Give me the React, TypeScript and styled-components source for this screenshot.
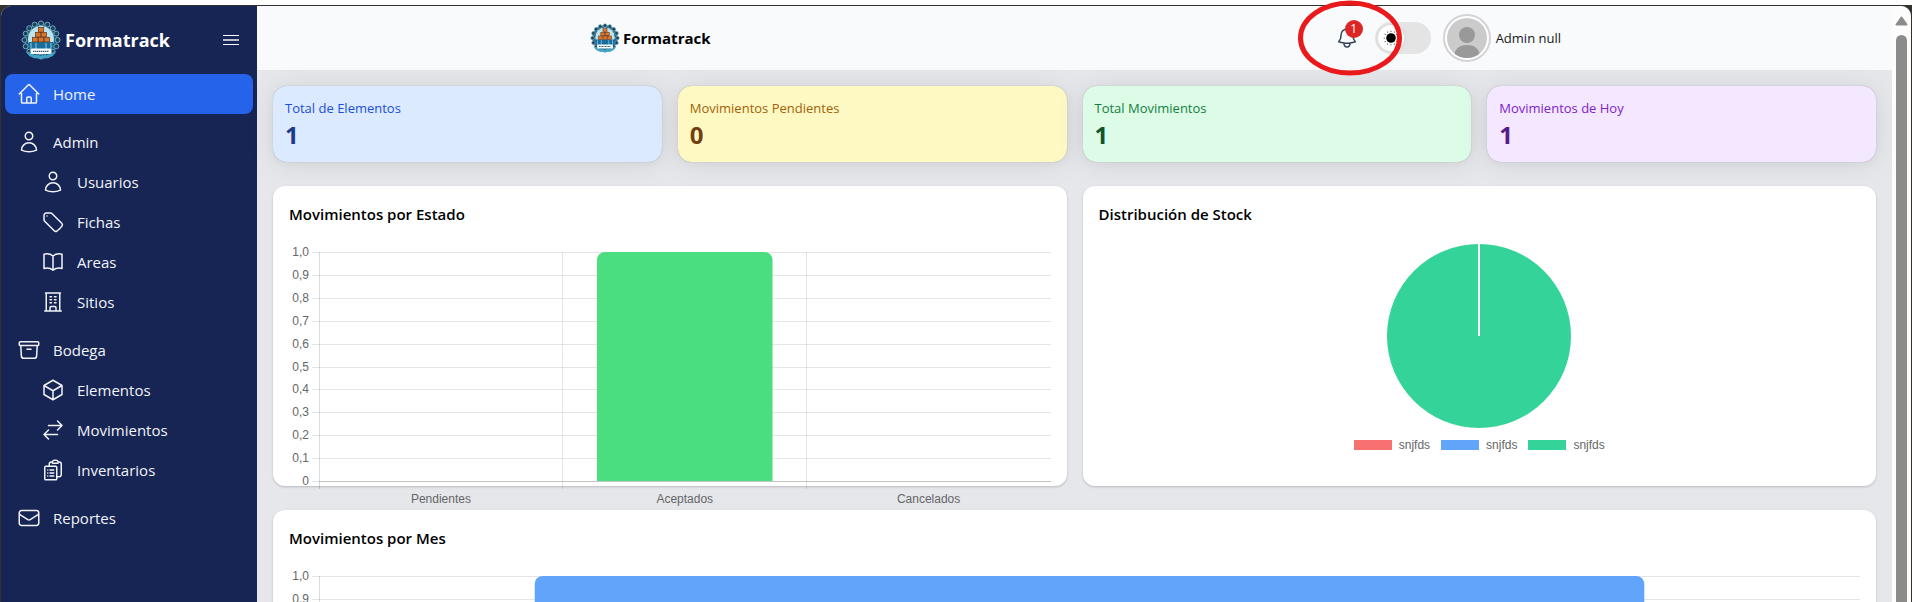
import React from "react";
import styled, { createGlobalStyle } from "styled-components";
import {
  HiOutlineHome,
  HiOutlineUser,
  HiOutlineTag,
  HiOutlineBookOpen,
  HiOutlineBuildingOffice,
  HiOutlineArchiveBox,
  HiOutlineCube,
  HiOutlineArrowsRightLeft,
  HiOutlineClipboardDocumentList,
  HiOutlineEnvelope,
  HiOutlineBell,
} from "react-icons/hi2";

const GlobalStyle = createGlobalStyle`
  *, *::before, *::after { box-sizing: border-box; }
  body {
    margin: 0;
    background: #ffffff;
    font-family: "Open Sans", "Noto Sans", sans-serif;
    color: #000000;
  }
  h2, p { margin: 0; }
  button { font: inherit; border: 0; padding: 0; background: none; cursor: pointer; }
`;

const WindowEdge = styled.div`
  height: 100vh;
  overflow: hidden;
  padding: 6px 1px 0;
  background: linear-gradient(#ffffff 5px, #33322f 5px);
`;

const Shell = styled.div`
  display: flex;
  height: 100%;
  border-radius: 10px 10px 0 0;
  background: #e5e7eb;
`;

/* Sidebar */

const Sidebar = styled.aside`
  flex: none;
  width: 256px;
  border-top-left-radius: 10px;
  background: #172554;
  color: #f1f3f8;
`;

const SidebarHead = styled.div`
  display: flex;
  align-items: center;
  justify-content: space-between;
  height: 68px;
  padding: 0 18px 0 20px;
`;

const Brand = styled.div<{ $size: number }>`
  display: flex;
  align-items: center;
  gap: ${(p) => (p.$size > 16 ? 4 : 3)}px;
  font-size: ${(p) => p.$size}px;
  font-weight: 700;
`;

const SidebarBrand = styled(Brand)`
  color: #ffffff;
`;

const MenuButton = styled.button`
  display: flex;
  color: #ffffff;
`;

const Nav = styled.nav`
  display: flex;
  flex-direction: column;
  gap: 8px;
  padding: 0 4px;
`;

const NavGroup = styled.div`
  display: flex;
  flex-direction: column;
`;

const NavLink = styled.a<{ $active?: boolean; $child?: boolean }>`
  display: flex;
  align-items: center;
  gap: 12px;
  height: 40px;
  padding-left: ${(p) => (p.$child ? 36 : 12)}px;
  border-radius: 8px;
  background: ${(p) => (p.$active ? "#2563eb" : "transparent")};
  color: inherit;
  font-size: 15px;
  font-weight: 500;
  text-decoration: none;

  svg { width: 24px; height: 24px; flex: none; }
`;

/* Top bar */

const Page = styled.div`
  display: flex;
  flex: 1;
  flex-direction: column;
  min-width: 0;
`;

const TopBar = styled.header`
  display: flex;
  flex: none;
  align-items: center;
  justify-content: space-between;
  height: 64px;
  padding: 0 20%;
  background: #f8fafc;
`;

const TopBrand = styled(Brand)`
  padding-left: 6px;
`;

const Tools = styled.div`
  display: flex;
  align-items: center;
  padding-right: 4px;
`;

const BellButton = styled.button`
  position: relative;
  display: flex;
  margin-right: 16px;
  color: #334155;

  svg.bell { width: 24px; height: 24px; }
`;

const Badge = styled.span`
  position: absolute;
  top: -6px;
  right: -4px;
  width: 18px;
  height: 18px;
  border-radius: 50%;
  background: #dc2626;
  color: #ffffff;
  font-size: 12px;
  line-height: 18px;
  text-align: center;
`;

const Marker = styled.svg`
  position: absolute;
  z-index: 2;
  top: -26px;
  left: -38px;
  width: 106px;
  height: 76px;
  pointer-events: none;
`;

const Switch = styled.label`
  position: relative;
  display: flex;
  align-items: center;
  width: 56px;
  height: 32px;
  padding: 0 3px;
  margin-right: 12px;
  border-radius: 16px;
  background: #e4e4e5;
  cursor: pointer;

  input {
    position: absolute;
    inset: 0;
    margin: 0;
    opacity: 0;
  }
`;

const Thumb = styled.span`
  display: flex;
  width: 26px;
  height: 26px;
  border-radius: 50%;
  background: #ffffff;
  box-shadow: 0 0 4px rgba(0, 0, 0, 0.08);
`;

const Avatar = styled.span`
  display: flex;
  width: 48px;
  height: 48px;
  margin-right: 5px;
  padding: 2px;
  border: 2px solid #d4d4d8;
  border-radius: 50%;
  background: #ffffff;
`;

const UserName = styled.span`
  font-size: 13px;
  line-height: 20px;
  color: #18181b;
`;

/* Dashboard */

const Main = styled.main`
  display: flex;
  flex-direction: column;
  gap: 24px;
  padding: 16px;
`;

const Stats = styled.section`
  display: grid;
  grid-template-columns: repeat(4, 1fr);
  gap: 16px;
`;

const StatCard = styled.div<{ $bg: string; $label: string; $value: string }>`
  height: 76px;
  padding: 12px;
  border-radius: 14px;
  background: ${(p) => p.$bg};
  box-shadow: 0 0 1px rgba(0, 0, 0, 0.3), 0 2px 10px rgba(0, 0, 0, 0.04),
    0 2px 30px rgba(0, 0, 0, 0.08);

  p { font-size: 13px; line-height: 20px; color: ${(p) => p.$label}; }
  strong { display: block; font-size: 24px; line-height: 34px; color: ${(p) => p.$value}; }
`;

const Charts = styled.section`
  display: grid;
  grid-template-columns: repeat(2, 1fr);
  gap: 24px 16px;
`;

const ChartCard = styled.article<{ $wide?: boolean }>`
  position: relative;
  height: 300px;
  padding: 16px;
  grid-column: ${(p) => (p.$wide ? "1 / -1" : "auto")};
  border-radius: 12px;
  background: #ffffff;
  box-shadow: 0 1px 3px rgba(0, 0, 0, 0.1), 0 1px 2px rgba(0, 0, 0, 0.1);

  h2 { font-size: 15px; font-weight: 600; line-height: 24px; }
`;

const BarArea = styled.div`
  display: flex;
  height: 264px;
  margin-top: 16px;
`;

const ChartSvg = styled.svg`
  display: block;
  height: 264px;
  overflow: visible;
  font-family: "Liberation Sans", Arial, sans-serif;
  font-size: 12px;
  fill: #666666;
`;

const AxisSvg = styled(ChartSvg)`
  flex: none;
  width: 30px;
`;

const PlotSvg = styled(ChartSvg)`
  flex: 1;
  min-width: 0;
`;

const PieArea = styled.div`
  display: flex;
  flex-direction: column;
  align-items: center;
  gap: 9px;
  margin-top: 17px;
`;

const Legend = styled.ul`
  display: flex;
  gap: 11px;
  margin: 0;
  padding: 0;
  list-style: none;
  font-family: "Liberation Sans", Arial, sans-serif;
  font-size: 12px;
  line-height: 14px;
  color: #666666;
`;

const LegendItem = styled.li<{ $color: string }>`
  display: flex;
  align-items: center;
  gap: 7px;

  &::before {
    content: "";
    width: 38px;
    height: 10px;
    background: ${(p) => p.$color};
  }
`;

/* Scroll rail */

const ScrollRail = styled.div`
  display: flex;
  flex: none;
  flex-direction: column;
  align-items: center;
  gap: 9px;
  width: 19px;
  padding-top: 10px;
  border-top-right-radius: 10px;
  background: #fcfcfc;
`;

const ScrollThumb = styled.div`
  flex: 1;
  width: 11px;
  border-radius: 6px 6px 0 0;
  background: #8b8b8b;
`;

const ringAngles = Array.from({ length: 16 }, (_, i) => (i * Math.PI) / 8);

function Logo({ size }: { size: number }) {
  return (
    <svg width={size} height={size} viewBox="0 0 40 40" aria-hidden="true">
      <circle cx="20" cy="20" r="17" fill="#1d5878" />
      {ringAngles.map((a) => (
        <circle
          key={a}
          cx={20 + 16.6 * Math.cos(a)}
          cy={20 + 16.6 * Math.sin(a)}
          r="2.5"
          fill="#17455f"
          stroke="#8cc3d4"
          strokeWidth="0.8"
        />
      ))}
      <circle cx="20" cy="19" r="13" fill="#b9e4ef" />
      <path d="M8 22h24v6l-4 5H12l-4-5z" fill="#1c6c9c" />
      <path d="M10 23v7M15 23v7M25 23v7M30 23v7" stroke="#6fc0dc" strokeWidth="1.2" />
      <g fill="#d9752b" stroke="#6b3415" strokeWidth="0.7">
        <rect x="17.3" y="7.5" width="5.4" height="4.6" />
        <rect x="14.4" y="12.4" width="5.4" height="4.6" />
        <rect x="20.2" y="12.4" width="5.4" height="4.6" />
        <rect x="11.4" y="17.3" width="5.4" height="4.6" />
        <rect x="17.3" y="17.3" width="5.4" height="4.6" />
        <rect x="23.2" y="17.3" width="5.4" height="4.6" />
      </g>
      <path d="M6 31q14 9 28 0l-2 5q-12 6-24 0z" fill="#40a5c8" />
      <rect x="9.5" y="28.5" width="21" height="5.6" rx="1.6" fill="#f5fbfd" />
      <path d="M12 31.3h16" stroke="#3b5564" strokeWidth="1.3" strokeDasharray="1.4 0.6" />
    </svg>
  );
}

function SunIcon() {
  const rays = Array.from({ length: 12 }, (_, i) => (i * Math.PI) / 6);
  return (
    <svg width="26" height="26" viewBox="0 0 26 26" aria-hidden="true">
      <circle cx="13" cy="13" r="4.8" />
      {rays.map((a) => (
        <circle key={a} cx={13 + 6.8 * Math.cos(a)} cy={13 + 6.8 * Math.sin(a)} r="0.5" />
      ))}
    </svg>
  );
}

function Person() {
  return (
    <svg width="40" height="40" viewBox="0 0 40 40" role="img" aria-label="Admin null">
      <clipPath id="avatar-clip">
        <circle cx="20" cy="20" r="20" />
      </clipPath>
      <g clipPath="url(#avatar-clip)">
        <rect width="40" height="40" fill="#cbcbcb" />
        <circle cx="20" cy="17" r="8" fill="#999999" />
        <path d="M7 40c0-9 5-13 13-13s13 4 13 13z" fill="#999999" />
      </g>
    </svg>
  );
}

const TOP = 10;
const HEIGHT = 229;
const ticks = Array.from({ length: 11 }, (_, i) => ({
  label: i === 10 ? "0" : ((10 - i) / 10).toFixed(1).replace(".", ","),
  y: TOP + Math.round((HEIGHT * i) / 10),
}));

interface Category {
  name: string;
  value: number;
}

function BarChart({ data, color }: { data: Category[]; color: string }) {
  const step = 100 / data.length;
  const clipId = "bars-" + color.slice(1);
  return (
    <BarArea>
      <AxisSvg>
        {ticks.map((t) => (
          <text key={t.label} x="20" y={t.y + 4} textAnchor="end">
            {t.label}
          </text>
        ))}
      </AxisSvg>
      <PlotSvg>
        <g stroke="#e5e5e5" shapeRendering="crispEdges">
          {ticks.map((t) => (
            <line key={t.label} x1="-7" x2="100%" y1={t.y} y2={t.y} />
          ))}
          {data.slice(1).map((d, i) => (
            <line
              key={d.name}
              x1={`${step * (i + 1)}%`}
              x2={`${step * (i + 1)}%`}
              y1={TOP}
              y2={TOP + HEIGHT + 8}
              stroke="#000000"
              strokeOpacity="0.1"
            />
          ))}
        </g>
        <clipPath id={clipId}>
          <rect x="0" y="0" width="100%" height={TOP + HEIGHT} />
        </clipPath>
        <g clipPath={`url(#${clipId})`}>
          {data.map((d, i) =>
            d.value > 0 ? (
              <rect
                key={d.name}
                x={`${step * (i + 0.14)}%`}
                y={TOP + HEIGHT * (1 - d.value)}
                width={`${step * 0.72}%`}
                height={HEIGHT * d.value + 10}
                rx="8"
                fill={color}
              />
            ) : null
          )}
        </g>
        <g stroke="#000000" strokeOpacity="0.14" shapeRendering="crispEdges">
          <line x1="0" x2="0" y1={TOP} y2={TOP + HEIGHT + 8} />
          <line x1="0" x2="100%" y1={TOP + HEIGHT} y2={TOP + HEIGHT} />
        </g>
        {data.map((d, i) => (
          <text key={d.name} x={`${step * (i + 0.5)}%`} y={TOP + HEIGHT + 22} textAnchor="middle">
            {d.name}
          </text>
        ))}
      </PlotSvg>
    </BarArea>
  );
}

const groups = [
  { title: "Home", Icon: HiOutlineHome, active: true, children: [] },
  {
    title: "Admin",
    Icon: HiOutlineUser,
    children: [
      { title: "Usuarios", Icon: HiOutlineUser },
      { title: "Fichas", Icon: HiOutlineTag },
      { title: "Areas", Icon: HiOutlineBookOpen },
      { title: "Sitios", Icon: HiOutlineBuildingOffice },
    ],
  },
  {
    title: "Bodega",
    Icon: HiOutlineArchiveBox,
    children: [
      { title: "Elementos", Icon: HiOutlineCube },
      { title: "Movimientos", Icon: HiOutlineArrowsRightLeft },
      { title: "Inventarios", Icon: HiOutlineClipboardDocumentList },
    ],
  },
  { title: "Reportes", Icon: HiOutlineEnvelope, children: [] },
];

const stats = [
  { label: "Total de Elementos", value: 1, colors: ["#dbeafe", "#1d4ed8", "#1e3a8a"] },
  { label: "Movimientos Pendientes", value: 0, colors: ["#fef9c3", "#a16207", "#713f12"] },
  { label: "Total Movimientos", value: 1, colors: ["#dcfce7", "#15803d", "#14532d"] },
  { label: "Movimientos de Hoy", value: 1, colors: ["#f3e8ff", "#7e22ce", "#581c87"] },
];

const stock = [
  { id: "a", name: "snjfds", color: "#f87171" },
  { id: "b", name: "snjfds", color: "#60a5fa" },
  { id: "c", name: "snjfds", color: "#34d399" },
];

export default function App() {
  return (
    <WindowEdge>
      <GlobalStyle />
      <Shell>
        <Sidebar>
          <SidebarHead>
            <SidebarBrand $size={18}>
              <Logo size={40} />
              Formatrack
            </SidebarBrand>
            <MenuButton type="button" aria-label="Menú">
              <svg width="16" height="12" viewBox="0 0 16 12" stroke="currentColor" aria-hidden="true">
                <path d="M0 1.5h16M0 10.5h16" />
                <path d="M0 6h16" strokeWidth="2" strokeOpacity="0.7" />
              </svg>
            </MenuButton>
          </SidebarHead>
          <Nav>
            {groups.map(({ title, Icon, active, children }) => (
              <NavGroup key={title}>
                <NavLink href="#" $active={active}>
                  <Icon />
                  {title}
                </NavLink>
                {children.map((c) => (
                  <NavLink key={c.title} href="#" $child>
                    <c.Icon />
                    {c.title}
                  </NavLink>
                ))}
              </NavGroup>
            ))}
          </Nav>
        </Sidebar>
        <Page>
          <TopBar>
            <TopBrand $size={15}>
              <Logo size={30} />
              Formatrack
            </TopBrand>
            <Tools>
              <BellButton type="button" aria-label="Notificaciones">
                <HiOutlineBell className="bell" />
                <Badge>1</Badge>
                <Marker viewBox="0 0 106 76" aria-hidden="true">
                  <ellipse cx="53" cy="38" rx="49.5" ry="35" fill="none" stroke="#ea1a1c" strokeWidth="5" />
                </Marker>
              </BellButton>
              <Switch>
                <input type="checkbox" role="switch" aria-label="Modo oscuro" />
                <Thumb>
                  <SunIcon />
                </Thumb>
              </Switch>
              <Avatar>
                <Person />
              </Avatar>
              <UserName>Admin null</UserName>
            </Tools>
          </TopBar>
          <Main>
            <Stats>
              {stats.map((s) => (
                <StatCard key={s.label} $bg={s.colors[0]} $label={s.colors[1]} $value={s.colors[2]}>
                  <p>{s.label}</p>
                  <strong>{s.value}</strong>
                </StatCard>
              ))}
            </Stats>
            <Charts>
              <ChartCard>
                <h2>Movimientos por Estado</h2>
                <BarChart
                  color="#4ade80"
                  data={[
                    { name: "Pendientes", value: 0 },
                    { name: "Aceptados", value: 1 },
                    { name: "Cancelados", value: 0 },
                  ]}
                />
              </ChartCard>
              <ChartCard>
                <h2>Distribución de Stock</h2>
                <PieArea>
                  <svg width="186" height="186" viewBox="0 0 186 186" role="img" aria-label="Distribución de Stock">
                    <circle cx="93" cy="93" r="92" fill="#34d399" />
                    <path d="M93 0v93" stroke="#ffffff" strokeWidth="2" />
                  </svg>
                  <Legend>
                    {stock.map((s) => (
                      <LegendItem key={s.id} $color={s.color}>
                        {s.name}
                      </LegendItem>
                    ))}
                  </Legend>
                </PieArea>
              </ChartCard>
              <ChartCard $wide>
                <h2>Movimientos por Mes</h2>
                <BarChart color="#60a5fa" data={[{ name: "", value: 1 }]} />
              </ChartCard>
            </Charts>
          </Main>
        </Page>
        <ScrollRail aria-hidden="true">
          <svg width="13" height="10" viewBox="0 0 13 10">
            <path d="M6.5 1.5 11.5 8.5h-10z" fill="#8b8b8b" stroke="#8b8b8b" strokeWidth="2" strokeLinejoin="round" />
          </svg>
          <ScrollThumb />
        </ScrollRail>
      </Shell>
    </WindowEdge>
  );
}
